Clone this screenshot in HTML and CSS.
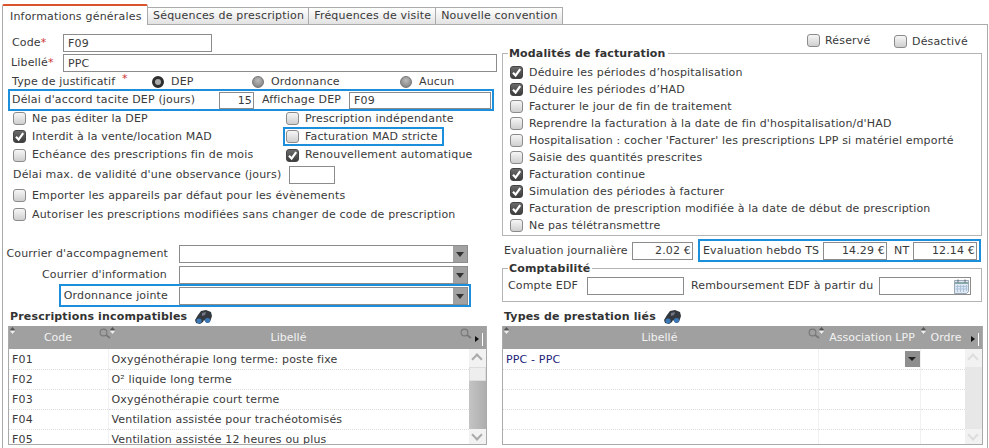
FILE: index.html
```html
<!DOCTYPE html>
<html lang="fr">
<head>
<meta charset="utf-8">
<title>Prescription</title>
<link rel="stylesheet" href="styles.css">
</head>
<body>
<svg class="defs" width="0" height="0">
  <symbol id="check" viewBox="0 0 13 13"><path d="M3 6.8 5.6 9.6 10.2 3.2" fill="none" stroke="#fff" stroke-width="2.2"/></symbol>
  <symbol id="bino" viewBox="0 0 17 14"><path d="M6 1 11 0 16 2 17 6 15 12 12 13 9 10 8 12 5 14 1 13 0 10 3 5Z" fill="#33393f"/><ellipse cx="4" cy="11" rx="2.6" ry="2.4" fill="#3a78b8"/><ellipse cx="12.5" cy="10.4" rx="2.6" ry="2.4" fill="#3a78b8"/><path d="M7 3 11 2 10 5 7 6Z" fill="#778"/></symbol>
  <symbol id="loupe" viewBox="0 0 12 11"><circle cx="4.5" cy="4.5" r="3.4" fill="none" stroke="#777" stroke-width="1.1"/><path d="M7 7 11 10" stroke="#777" stroke-width="1.6"/></symbol>
  <symbol id="sort" viewBox="0 0 5 7"><path d="M2.5 0 5 3H0Z" fill="#555"/><path d="M2.5 7 0 4H5Z" fill="#eee"/></symbol>
  <symbol id="cal" viewBox="0 0 15 15"><path d="M.5 1.5h14v11l-2 2H.5Z" fill="#dfe8f2" stroke="#9aa7b5"/><path d="M1 4h13" stroke="#8aa" stroke-width="2"/><path d="M3.5 6v7M6.5 6v7M9.5 6v7M12.5 6v6M1.5 7.5h12M1.5 10h12" stroke="#a9c3dc"/><path d="M4 .5v3M11 .5v3" stroke="#667"/></symbol>
</svg>

<nav class="tabs">
  <span class="tab active">Informations générales</span>
  <span class="tab">Séquences de prescription</span>
  <span class="tab">Fréquences de visite</span>
  <span class="tab">Nouvelle convention</span>
</nav>

<main class="panel">
  <section class="left">
    <div class="row r-code"><label class="lab-code">Code<i>*</i></label><input class="in in-code" value="F09"></div>
    <div class="row r-lib"><label class="lab-lib">Libellé<i>*</i></label><input class="in in-lib" value="PPC"></div>
    <div class="row r-type">
      <span class="type-label">Type de justificatif <i class="star">*</i></span>
      <span class="radio-item ri1"><span class="radio on"></span>DEP</span>
      <span class="radio-item ri2"><span class="radio"></span>Ordonnance</span>
      <span class="radio-item"><span class="radio"></span>Aucun</span>
    </div>
    <div class="row blue r-delai">
      <span class="delai-lab">Délai d'accord tacite DEP (jours)</span>
      <input class="in in-15" value="15">
      <span class="aff-lab">Affichage DEP</span>
      <input class="in in-aff" value="F09">
    </div>
    <div class="opts">
      <span class="ck"><span class="cb"></span>Ne pas éditer la DEP</span>
      <span class="ck"><span class="cb"></span>Prescription indépendante</span>
      <span class="ck"><span class="cb on"><svg><use href="#check"/></svg></span>Interdit à la vente/location MAD</span>
      <span class="ck blue mad"><span class="cb"></span>Facturation MAD stricte</span>
      <span class="ck"><span class="cb"></span>Echéance des prescriptions fin de mois</span>
      <span class="ck"><span class="cb on"><svg><use href="#check"/></svg></span>Renouvellement automatique</span>
    </div>
    <div class="row r-max"><span class="max-lab">Délai max. de validité d'une observance (jours)</span><input class="in in-max"></div>
    <div class="ck wide"><span class="cb"></span>Emporter les appareils par défaut pour les évènements</div>
    <div class="ck wide"><span class="cb"></span>Autoriser les prescriptions modifiées sans changer de code de prescription</div>

    <div class="row sel-row s1"><label>Courrier d'accompagnement</label><span class="select"><b class="arrow"></b></span></div>
    <div class="row sel-row s2"><label>Courrier d'information</label><span class="select"><b class="arrow"></b></span></div>
    <div class="row sel-row s3 blue"><label>Ordonnance jointe</label><span class="select"><b class="arrow"></b></span></div>

    <h2 class="title t-left">Prescriptions incompatibles <svg class="bino"><use href="#bino"/></svg></h2>
    <div class="grid grid-left">
      <div class="ghead">
        <span class="th c-code">Code<svg class="sort"><use href="#sort"/></svg><svg class="loupe"><use href="#loupe"/></svg></span>
        <span class="th c-lib">Libellé<svg class="sort"><use href="#sort"/></svg><svg class="loupe"><use href="#loupe"/></svg></span>
        <span class="more"></span>
      </div>
      <div class="gbody">
        <table>
          <tr><td class="c-code">F01</td><td>Oxygénothérapie long terme: poste fixe</td></tr>
          <tr><td class="c-code">F02</td><td>O² liquide long terme</td></tr>
          <tr><td class="c-code">F03</td><td>Oxygénothérapie court terme</td></tr>
          <tr><td class="c-code">F04</td><td>Ventilation assistée pour trachéotomisés</td></tr>
          <tr><td class="c-code">F05</td><td>Ventilation assistée 12 heures ou plus</td></tr>
        </table>
        <div class="sb"><span class="sb-up"></span><span class="sb-thumb"></span><span class="sb-track"></span><span class="sb-down"></span></div>
      </div>
    </div>
  </section>

  <section class="right">
    <div class="flags">
      <span class="ck"><span class="cb"></span>Réservé</span>
      <span class="ck"><span class="cb"></span>Désactivé</span>
    </div>
    <fieldset class="fs fs-mod">
      <legend>Modalités de facturation</legend>
      <div class="ck"><span class="cb on"><svg><use href="#check"/></svg></span>Déduire les périodes d’hospitalisation</div>
      <div class="ck"><span class="cb on"><svg><use href="#check"/></svg></span>Déduire les périodes d’HAD</div>
      <div class="ck"><span class="cb"></span>Facturer le jour de fin de traitement</div>
      <div class="ck"><span class="cb"></span>Reprendre la facturation à la date de fin d'hospitalisation/d'HAD</div>
      <div class="ck"><span class="cb"></span>Hospitalisation : cocher 'Facturer' les prescriptions LPP si matériel emporté</div>
      <div class="ck"><span class="cb"></span>Saisie des quantités prescrites</div>
      <div class="ck"><span class="cb on"><svg><use href="#check"/></svg></span>Facturation continue</div>
      <div class="ck"><span class="cb on"><svg><use href="#check"/></svg></span>Simulation des périodes à facturer</div>
      <div class="ck"><span class="cb on"><svg><use href="#check"/></svg></span>Facturation de prescription modifiée à la date de début de prescription</div>
      <div class="ck"><span class="cb"></span>Ne pas télétransmettre</div>
    </fieldset>
    <div class="row evals">
      <span class="ev-lab">Evaluation journalière</span>
      <input class="in num in-ev" value="2.02 €">
      <div class="row blue ev-box">
        <span class="ev-ts">Evaluation hebdo TS</span>
        <input class="in num in-ev2" value="14.29 €">
        <span class="ev-nt">NT</span>
        <input class="in num in-ev2" value="12.14 €">
      </div>
    </div>
    <fieldset class="fs fs-cpt">
      <legend>Comptabilité</legend>
      <div class="row">
        <span class="cpt-lab">Compte EDF</span>
        <input class="in in-cpt">
        <span class="rmb-lab">Remboursement EDF à partir du</span>
        <span class="date"><svg class="cal"><use href="#cal"/></svg></span>
      </div>
    </fieldset>
    <h2 class="title t-right">Types de prestation liés <svg class="bino"><use href="#bino"/></svg></h2>
    <div class="grid grid-right">
      <div class="ghead">
        <span class="th c-l2">Libellé<svg class="sort"><use href="#sort"/></svg><svg class="loupe"><use href="#loupe"/></svg></span>
        <span class="th c-as">Association LPP<svg class="sort"><use href="#sort"/></svg></span>
        <span class="th c-or">Ordre<svg class="sort"><use href="#sort"/></svg></span>
        <span class="more"></span>
      </div>
      <div class="gbody">
        <table>
          <tr><td class="c-l2 blue-text">PPC - PPC</td><td class="c-as"><b class="mini"><b class="arrow-s"></b></b></td><td></td></tr>
          <tr><td class="c-l2"></td><td class="c-as"></td><td></td></tr>
          <tr><td class="c-l2"></td><td class="c-as"></td><td></td></tr>
          <tr><td class="c-l2"></td><td class="c-as"></td><td></td></tr>
          <tr><td class="c-l2"></td><td class="c-as"></td><td></td></tr>
        </table>
        <div class="sb sb-idle"><span class="sb-up"></span><span class="sb-track"></span><span class="sb-down"></span></div>
      </div>
    </div>
  </section>
</main>
</body>
</html>
```
FILE: styles.css
```css
* { box-sizing: border-box; }
html, body { margin: 0; height: 448px; overflow: hidden; background: #fff; }
body { font: 11px/14px "DejaVu Sans", Verdana, sans-serif; letter-spacing: .16px; color: #3a3a3a; padding: 3px 0 0 2px; }
.defs { position: absolute; }
i { font-style: normal; color: #c33; }

.tabs { display: flex; height: 21px; align-items: flex-end; letter-spacing: .2px; }
.tab { height: 17px; padding: 1px 4px 0 5px; border: 1px solid #aaa; border-bottom: 0; border-left: 0; background: linear-gradient(#fff, #e2e2e2); white-space: nowrap; }
.tab.active { width: 146px; height: 21px; padding: 4px 0 0 7px; border: 1px solid #aaa; border-top: 2px solid #d9542a; border-bottom: 0; background: #fff; position: relative; top: 1px; border-radius: 2px 2px 0 0; }

.panel { width: 986px; height: 430px; border: 1px solid #aaa; border-bottom: 0; display: flex; }
.left { width: 494px; padding-top: 9px; flex: none; }
.right { width: 486px; margin-left: 5px; flex: none; }

.row { display: flex; align-items: center; }
.in { height: 18px; border: 1px solid #8c8c8c; padding: 0 3px 0 4px; font: inherit; letter-spacing: inherit; color: inherit; background: #fff; outline: 0; border-radius: 0; }
.num { text-align: right; padding-right: 1px; }

.r-code { height: 18px; }
.lab-code { width: 60px; padding-left: 9px; }
.lab-lib { width: 60px; padding-left: 8px; }
.in-code { width: 149px; }
.r-lib { height: 18px; margin-top: 2px; }
.in-lib { width: 434px; }
.r-type { height: 17px; padding: 2px 0 0 9px; }
.type-label { width: 140px; flex: none; }
.star { color: #c33; position: relative; top: -3px; margin-left: 3px; }
.radio-item { display: flex; align-items: center; }
.ri1 { width: 100px; }
.ri2 { width: 148px; }
.radio { width: 12px; height: 12px; border-radius: 50%; margin-right: 7px; border: 1px solid #777; background: radial-gradient(circle at 50% 35%, #bbb, #777); }
.radio.on { border: 3px solid #2e2e2e; background: #aaa; }

.blue { border: 2px solid #1b8fdb; }
.r-delai { width: 486px; height: 22px; margin-left: 5px; padding-left: 2px; }
.delai-lab { width: 207px; flex: none; }
.in-15 { width: 35px; height: 17px; text-align: right; padding-right: 1px; }
.aff-lab { margin-left: 8px; width: 87px; flex: none; }
.in-aff { width: 142px; height: 17px; }

.opts { display: grid; grid-template-columns: 273px 158px; grid-template-rows: 17px 19px 18px; margin: -1px 0 0 10px; }
.ck { display: flex; align-items: center; white-space: nowrap; }
.cb { width: 13px; height: 13px; flex: none; margin-right: 6px; border: 1px solid #8b8b8b; border-radius: 3px; background: linear-gradient(#f6f6f6, #cfcfcf); display: block; }
.cb.on { background: linear-gradient(#6b6b6b, #3c3c3c); border-color: #444; }
.cb svg { display: block; width: 13px; height: 13px; margin: -1px; }
.mad { margin-left: -3px; padding-left: 1px; }

.r-max { height: 18px; margin: 2px 0 0 10px; }
.max-lab { width: 276px; flex: none; white-space: nowrap; }
.in-max { width: 46px; }
.wide { height: 19px; margin-left: 10px; }
.r-max + .wide { margin-top: 2px; }

.sel-row label { text-align: right; flex: none; white-space: nowrap; }
.sel-row { height: 21px; }
.s1 { margin-top: 19px; }
.s1 label { width: 165px; }
.s2 label { width: 164px; }
.select { display: block; position: relative; width: 289px; height: 18px; border: 1px solid #8c8c8c; margin-left: 11px; background: #fff; }
.arrow { position: absolute; right: 0; top: 0; width: 14px; height: 16px; background: #a2a2a2; }
.arrow::after { content: ""; position: absolute; left: 3px; top: 6px; border: 4px solid transparent; border-top: 5px solid #333; border-bottom: 0; }
.s2 .select { margin-left: 12px; }
.s3 { width: 412px; height: 23px; margin-left: 56px; margin-top: -1px; }
.s3 label { width: 107px; }
.s3 .select { margin-left: 11px; height: 18px; }

.title { font: bold 11px/14px "DejaVu Sans", Verdana, sans-serif; letter-spacing: .16px; color: #333; margin: 0; display: flex; align-items: center; height: 19px; }
.bino { width: 17px; height: 14px; margin-left: 8px; }
.t-left { margin-left: 7px; }
.t-right { margin: 5px 0 0 2px; }

.grid { border: 1px solid #aaa; border-top: 0; height: 119px; overflow: hidden; }
.grid-left { margin-left: 5px; width: 479px; }
.grid-right { width: 481px; }
.ghead { display: flex; height: 23px; background: #a0a0a0; color: #f2f2f2; margin: 0 -1px; position: relative; letter-spacing: 0; }
.th { position: relative; display: block; text-align: center; line-height: 24px; white-space: nowrap; }
.more { position: absolute; right: 4px; top: 7px; height: 13px; border-right: 1px solid #fff; width: 9px; }
.more::before { content: ""; position: absolute; left: 1px; top: 3px; border: 3px solid transparent; border-left: 4px solid #111; }
.sort { position: absolute; left: 2px; top: 1px; width: 5px; height: 7px; }
.loupe { position: absolute; right: -3px; top: 2px; width: 12px; height: 11px; }
.grid-left .c-code { width: 100px; }
.grid-left .c-lib { width: 361px; }
.grid-right .c-l2 { width: 315px; }
.grid-right .c-as { width: 102px; padding-left: 8px; }
.grid-right .c-or { width: 50px; padding-left: 4px; }

.gbody { display: flex; height: 96px; }
table { border-collapse: collapse; table-layout: fixed; flex: 1; align-self: flex-start; min-width: 0; }
td { height: 20px; padding: 2px 0 0 3px; border-bottom: 1px dotted #ddd; border-right: 1px solid #f1f1f1; white-space: nowrap; position: relative; }
td:last-child { border-right: 0; }
.grid-left td.c-code { width: 99px; }
.grid-right td.c-l2 { width: 315px; }
.grid-right td.c-as { width: 102px; padding-left: 0; }
.blue-text { color: #22227a; }
.mini { position: absolute; right: 0; top: 2px; width: 15px; height: 16px; background: #8f8f8f; }
.arrow-s { position: absolute; left: 3px; top: 6px; border: 4px solid transparent; border-top: 4px solid #222; border-bottom: 0; }

.sb { width: 17px; display: flex; flex-direction: column; flex: none; }
.sb span { display: block; }
.sb-up, .sb-down { height: 18px; background: #f2f2f2; position: relative; }
.sb-down { height: 16px; }
.sb-up::after, .sb-down::after { content: ""; position: absolute; left: 4px; top: 6px; width: 6px; height: 6px; border: solid #aaa; border-width: 2px 0 0 2px; transform: rotate(45deg); }
.sb-down::after { transform: rotate(225deg); top: 2px; }
.sb-thumb { height: 14px; background: #eee; border: 1px solid #ddd; }
.sb-track { flex: 1; background: linear-gradient(90deg, #c4c4c4, #aeaeae); }
.sb-idle .sb-track { background: #e7e7e7; }
.sb-idle .sb-up::after, .sb-idle .sb-down::after { border-color: #ddd; }

.flags { display: flex; height: 22px; padding: 10px 0 0 305px; }
.flags .ck { width: 87px; height: 13px; }
.flags .ck:first-child { margin-top: -1px; }
.flags .cb { margin-right: 5px; }
.fs { margin: 0; padding: 0; border: 1px solid #b4b4b4; min-width: 0; width: 480px; }
.fs legend { font-weight: bold; color: #333; padding: 0 2px 0 1px; line-height: 13px; }
.fs-mod { height: 189px; padding: 4px 0 0 7px; }
.fs-mod legend { margin-left: -2px; }
.fs-mod .ck { height: 17px; }

.evals { height: 23px; margin-top: 3px; width: 480px; }
.ev-lab { margin-left: 2px; width: 128px; flex: none; white-space: nowrap; }
.in-ev { width: 61px; }
.ev-box { width: 283px; height: 23px; margin-left: 5px; padding-left: 3px; flex: none; }
.ev-ts { width: 120px; flex: none; white-space: nowrap; }
.in-ev2 { width: 64px; }
.ev-nt { width: 26px; padding-left: 7px; flex: none; }

.fs-cpt { height: 40px; padding: 2px 0 0 5px; }
.fs-cpt legend { margin-left: 0; }
.cpt-lab { width: 79px; flex: none; white-space: nowrap; }
.in-cpt { width: 97px; }
.rmb-lab { margin-left: 7px; width: 188px; flex: none; white-space: nowrap; }
.date { display: block; position: relative; width: 92px; height: 18px; border: 1px solid #8c8c8c; }
.cal { position: absolute; right: 1px; top: 1px; width: 15px; height: 15px; }
```
